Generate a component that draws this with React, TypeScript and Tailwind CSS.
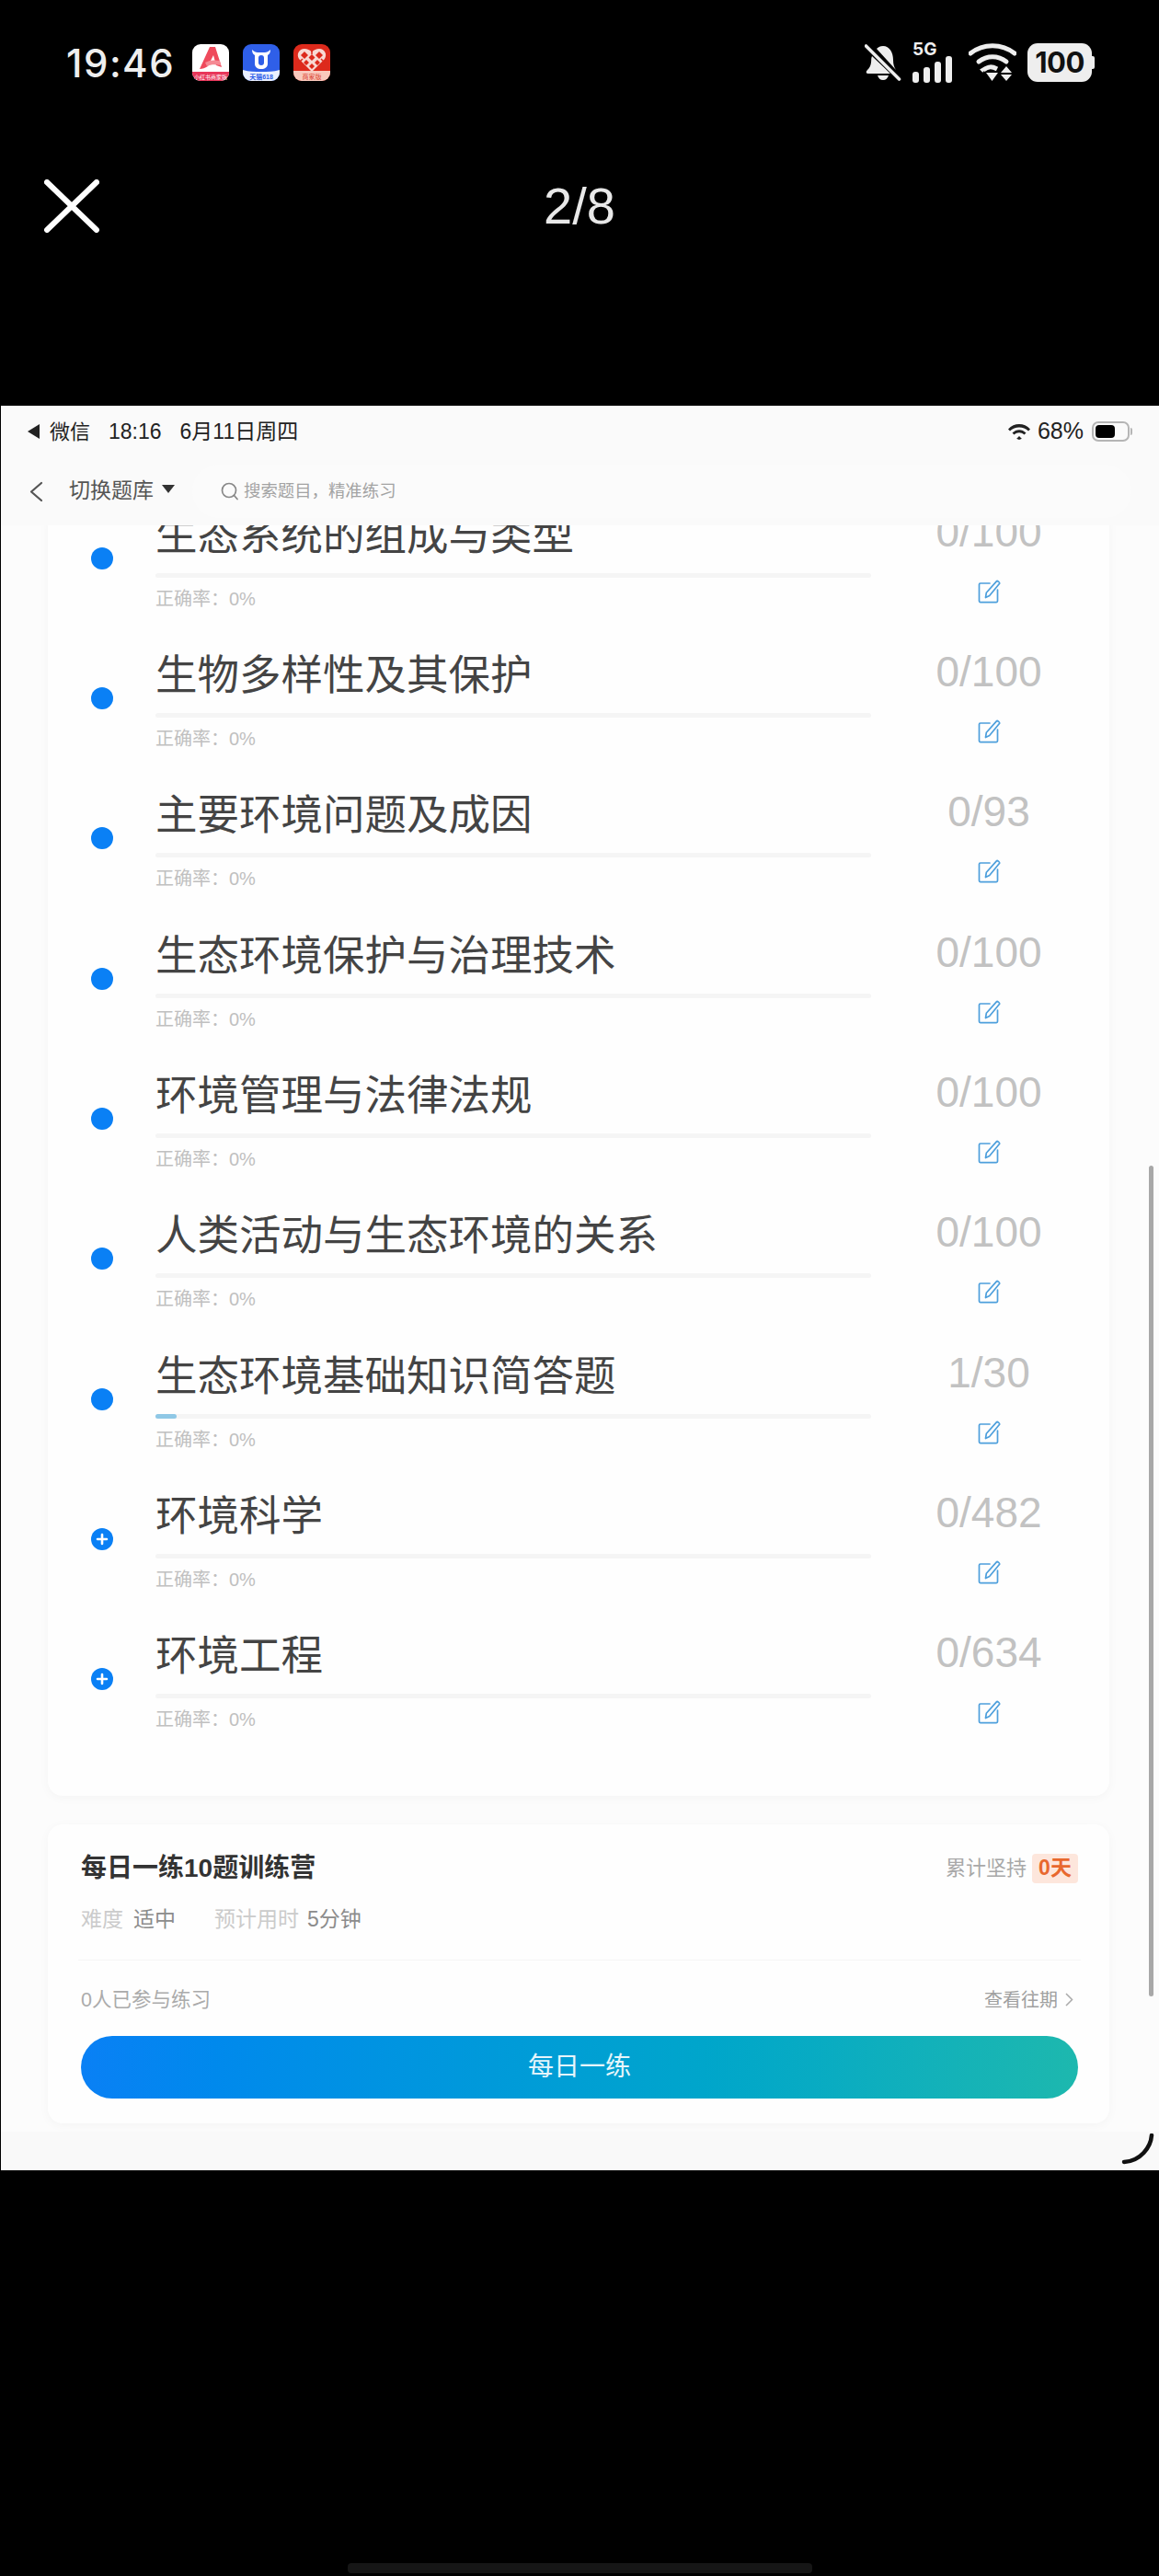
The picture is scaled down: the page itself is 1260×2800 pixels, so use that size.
import React from 'react';

const CJK = "font-['Liberation_Sans','Noto_Sans_CJK_SC',sans-serif]";

const topics = [
  { title: '生态系统的组成与类型', count: '0/100' },
  { title: '生物多样性及其保护', count: '0/100' },
  { title: '主要环境问题及成因', count: '0/93' },
  { title: '生态环境保护与治理技术', count: '0/100' },
  { title: '环境管理与法律法规', count: '0/100' },
  { title: '人类活动与生态环境的关系', count: '0/100' },
  { title: '生态环境基础知识简答题', count: '1/30', started: true },
  { title: '环境科学', count: '0/482', expandable: true },
  { title: '环境工程', count: '0/634', expandable: true },
];

const EditIcon = () => (
  <svg width="25" height="26" viewBox="0 0 25 26" fill="none" stroke="#4d9fdc" strokeWidth="1.7" strokeLinecap="round" strokeLinejoin="round">
    <path d="M13 4H2.8A1.3 1.3 0 0 0 1.5 5.3v18a1.3 1.3 0 0 0 1.3 1.3h17.4a1.3 1.3 0 0 0 1.3-1.3V11" />
    <path d="M8.5 19.5l.8-5.2L20.6 1.6c.7-.6 3.6 1.7 3 2.7L12.7 17.5z" />
  </svg>
);

const TopicDot = ({ expandable }: { expandable?: boolean }) => (
  <div className="w-6 h-6 rounded-full bg-[#0a80f5] flex items-center justify-center">
    {expandable && (
      <svg width="14" height="14" viewBox="0 0 14 14" stroke="white" strokeWidth="2.6" strokeLinecap="round">
        <path d="M7 2v10M2 7h10" />
      </svg>
    )}
  </div>
);

const TopicRow = ({ title, count, started, expandable }: { title: string; count: string; started?: boolean; expandable?: boolean }) => (
  <div className="flex h-[152.33px]">
    <div className="w-[24px] ml-[47px] mr-[46px] pt-[45px] shrink-0">
      <TopicDot expandable={expandable} />
    </div>
    <div className="w-[778px] shrink-0">
      <div className="h-[60px] leading-[66px] text-[45.5px] text-[#444] whitespace-nowrap">{title}</div>
      <div className="mt-[13px] h-[5px] rounded-full bg-[#f5f5f5]">
        {started && <div className="h-[5px] w-[23px] rounded-full bg-[#8fc8e6]" />}
      </div>
      <div className="mt-[11px] h-[24px] leading-[25px] text-[20px] text-[#c0c0c0]">正确率：0%</div>
    </div>
    <div className="ml-[13px] w-[230px] flex flex-col items-center">
      <div className="h-[60px] leading-[56px] text-[46px] text-[#c2c2c2]">{count}</div>
      <div className="mt-[20px] ml-[1px]">
        <EditIcon />
      </div>
    </div>
  </div>
);

const RedBookIcon = () => (
  <svg width="40" height="40" viewBox="0 0 40 40">
    <rect width="40" height="40" rx="9" fill="#fff" />
    <path d="M0 30h40v1a9 9 0 0 1-9 9H9a9 9 0 0 1-9-9z" fill="#e8365a" />
    <path d="M8 27L19 3h6l7 22-6-2-3-11-6 12c-3 2-6 3-9 3z" fill="#ef4a5c" />
    <path d="M14 20c5-3 10-3 16-2l1 5c-6-1-11-1-15 1z" fill="#f58a94" />
    <text x="20" y="38" textAnchor="middle" fontSize="6" fill="#fff">小红书商家版</text>
  </svg>
);

const TmallIcon = () => (
  <svg width="40" height="40" viewBox="0 0 40 40">
    <rect width="40" height="40" rx="9" fill="#2f5fe8" />
    <path d="M0 28c7 2 13 2 20 2s13 0 20-2v3a9 9 0 0 1-9 9H9a9 9 0 0 1-9-9z" fill="#eaf0ff" />
    <path d="M10 6c0 3 1 5 3 6v9c0 4 3 6 7 6s7-2 7-6v-9c2-1 3-3 3-6-2 2-4 3-6 3h-8c-2 0-4-1-6-3z" fill="#fff" />
    <rect x="17" y="12" width="6" height="11" rx="3" fill="#2f5fe8" />
    <text x="20" y="38" textAnchor="middle" fontSize="7" fontWeight="700" fill="#2f5fe8">天猫618</text>
  </svg>
);

const PddIcon = () => (
  <svg width="40" height="40" viewBox="0 0 40 40">
    <rect width="40" height="40" rx="9" fill="#dd2a1c" />
    <path d="M0 29h40v2a9 9 0 0 1-9 9H9a9 9 0 0 1-9-9z" fill="#f9c9bd" />
    <path d="M20 30L6 16c-3-5 0-11 6-11 3 0 6 1 8 4 2-3 5-4 8-4 6 0 9 6 6 11z" fill="#f8d9d3" />
    <path d="M12 8l4 4-4 4-4-4zM28 8l4 4-4 4-4-4zM20 11l3.500 3.500L20 18l-3.500-3.500zM14 17l3 3-3 3-3-3zM26 17l3 3-3 3-3-3zM20 21l3 3-3 3-3-3z" fill="#dd2a1c" />
    <path d="M20 4v7M6 20l4-4M34 20l-4-4" stroke="#dd2a1c" strokeWidth="1.5" />
    <text x="20" y="38" textAnchor="middle" fontSize="7" fill="#d9402e">商家版</text>
  </svg>
);

const BellOff = () => (
  <svg width="40" height="42" viewBox="0 0 40 42" fill="#eeeeee">
    <path d="M20 3c-3 0-5 1-7 3l21 23c-2-3-3-6-3-11 0-8-4-15-11-15zM8 14c-.6 1.300-.8 2.600-.8 4 0 6-2 9-5 12-1 1-.5 3 1.500 3h24.500z" />
    <path d="M14 35h12c-1 3-3 5-6 5s-5-2-6-5z" />
    <path d="M2 2l36 37" stroke="#000" strokeWidth="6" />
    <path d="M1.500 3l36 36" stroke="#eeeeee" strokeWidth="3.600" strokeLinecap="round" />
  </svg>
);

const SignalBars = () => (
  <div className="flex items-end gap-[5px] h-[29px]">
    <div className="w-[7px] h-[12px] rounded-[3px] bg-[#eeeeee]" />
    <div className="w-[7px] h-[17px] rounded-[3px] bg-[#eeeeee]" />
    <div className="w-[7px] h-[23px] rounded-[3px] bg-[#eeeeee]" />
    <div className="w-[7px] h-[29px] rounded-[3px] bg-[#eeeeee]" />
  </div>
);

const PhoneWifi = () => (
  <svg width="52" height="42" viewBox="0 0 52 42" fill="none" stroke="#eeeeee">
    <path d="M2 11c14-11 34-11 48 0" strokeWidth="5" strokeLinecap="round" />
    <path d="M11 20c9-7 21-7 30 0" strokeWidth="5" strokeLinecap="round" />
    <path d="M17 30l-1-1c6-4 9-4 15-1" strokeWidth="5" />
    <path d="M19 32h13l-6.500 9z" fill="#eeeeee" stroke="none" />
    <path d="M41 25l6 7H35zM35 34h12l-6 7z" fill="#eeeeee" stroke="none" />
  </svg>
);

const PadWifi = () => (
  <svg width="24" height="18" viewBox="0 0 24 18" fill="#222">
    <path d="M12 14l3 3h-0.500L12 18l-2.500-1H9z" />
    <path d="M0 6.500C6.500-.8 17.500-.8 24 6.500l-2 2C16.500 3 7.500 3 2 8.500z" />
    <path d="M4.500 10.500c4.500-4.500 10.500-4.500 15 0l-2 2c-3.500-3-7.500-3-11 0z" />
  </svg>
);

export default function App() {
  return (
    <div className={`relative w-[1260px] h-[2800px] bg-black flex flex-col ${CJK}`}>
      {/* phone status bar */}
      <div className="h-[136px] flex items-center pl-[72px] pr-[70px] shrink-0">
        <span className="font-['Inter',sans-serif] font-medium text-[42px] tracking-[1.5px] text-[#eeeeee] w-[137px]">19:46</span>
        <div className="flex gap-[15px]">
          <RedBookIcon />
          <TmallIcon />
          <PddIcon />
        </div>
        <div className="ml-auto flex items-center">
          <BellOff />
          <div className="ml-[12px] flex flex-col items-start w-[48px]">
            <span className="font-['Inter',sans-serif] font-bold text-[19px] leading-[15px] text-[#eeeeee]">5G</span>
            <SignalBars />
          </div>
          <div className="ml-[13px]"><PhoneWifi /></div>
          <div className="ml-[12px] flex items-center">
            <div className="w-[70px] h-[42px] rounded-[11px] bg-[#eeeeee] flex items-center justify-center font-['Inter',sans-serif] font-bold text-[31px] text-[#111] tracking-[-0.5px]">100</div>
            <div className="w-[3px] h-[14px] rounded-r-[2px] bg-[#eeeeee]" />
          </div>
        </div>
      </div>

      {/* viewer toolbar */}
      <div className="h-[176px] flex items-center relative shrink-0">
        <svg className="ml-[48px]" width="60" height="58" viewBox="0 0 60 58" stroke="white" strokeWidth="6" strokeLinecap="round">
          <path d="M3 3l54 52M57 3L3 55" />
        </svg>
        <span className="absolute left-0 right-0 text-center font-['Liberation_Sans',sans-serif] text-[56px] text-[#e8e8e8]">2/8</span>
      </div>

      {/* screenshot being viewed */}
      <div className="mt-[129px] h-[1918px] ml-px relative flex flex-col bg-[#fafafa] overflow-hidden shrink-0">
        <div className="h-[56px] shrink-0 flex items-center pl-[29px] pr-[27px] text-[23px] font-normal text-[#222]">
          <span className="w-0 h-0 border-y-[8px] border-y-transparent border-r-[13px] border-r-[#222]" />
          <span className="ml-[11px] text-[22px]">微信</span>
          <span className="ml-[20px]">18:16</span>
          <span className="ml-[20px]">6月11日周四</span>
          <div className="ml-auto flex items-center">
            <PadWifi />
            <span className="ml-[8px] text-[25px]">68%</span>
            <div className="ml-[9px] w-[41px] h-[22px] rounded-[7px] border-2 border-[#b5b5b5] p-[2px]">
              <div className="w-[21px] h-full rounded-[4px] bg-black" />
            </div>
            <div className="ml-[1px] mr-[2px] w-[2px] h-[8px] rounded-r-[2px] bg-[#b5b5b5]" />
          </div>
        </div>

        <div className="h-[74px] shrink-0 flex items-center z-10 bg-[#fafafa]">
          <svg className="ml-[31px]" width="15" height="23" viewBox="0 0 15 23" fill="none" stroke="#555" strokeWidth="2.2" strokeLinecap="round" strokeLinejoin="round">
            <path d="M13 2L2 11.500 13 21" />
          </svg>
          <span className="ml-[28px] text-[23px] text-[#555] -mt-[2px]">切换题库</span>
          <span className="ml-[9px] -mt-[5px] w-0 h-0 border-x-[7px] border-x-transparent border-t-[9px] border-t-[#333]" />
          <div className="ml-[19px] h-[58px] flex-1 mr-[30px] pl-[31px] rounded-full bg-[#fbfbfb] flex items-center">
            <svg width="20" height="20" viewBox="0 0 20 20" fill="none" stroke="#888" strokeWidth="1.700" strokeLinecap="round">
              <circle cx="9" cy="9" r="7.500" />
              <path d="M14.500 14.500l3.500 4" />
            </svg>
            <span className="ml-[5px] text-[18.4px] text-[#a3a3a3]">搜索题目，精准练习</span>
          </div>
        </div>

        <div className="flex-1 min-h-0 flex flex-col">
          <div className="pl-[51px] pr-[54px] pb-[9px] bg-[#fcfcfc]">
            <div className="-mt-[21.33px] pb-[31px] bg-[#fefefe] rounded-[16px] shadow-[0_2px_12px_rgba(0,0,0,0.035)]">
              {topics.map((t) => (
                <TopicRow key={t.title} {...t} />
              ))}
            </div>

            <div className="mt-[31px] h-[325px] pt-[32px] pl-[36px] pr-[34px] bg-[#fefefe] rounded-[16px] shadow-[0_2px_12px_rgba(0,0,0,0.035)]">
              <div className="h-[32px] flex items-center justify-between">
                <span className="text-[28px] font-semibold text-[#333] leading-[36px]">每日一练10题训练营</span>
                <div className="flex items-center">
                  <span className="text-[22px] leading-[34px] text-[#a8a8a8]">累计坚持</span>
                  <span className="ml-[6px] w-[50px] h-[32px] rounded-[4px] bg-[#fde6dc] flex items-center justify-center text-[23px] font-bold text-[#e8682e]">0天</span>
                </div>
              </div>
              <div className="mt-[25px] h-[30px] flex items-center text-[23px]">
                <span className="text-[#cbcbcb]">难度</span>
                <span className="ml-[11px] text-[#8c8c8c]">适中</span>
                <span className="ml-[42px] text-[#cbcbcb]">预计用时</span>
                <span className="ml-[9px] text-[#8c8c8c]">5分钟</span>
              </div>
              <div className="mt-[28px] h-px -mx-[3px] bg-[#f6f6f6]" />
              <div className="mt-[29px] h-[28px] flex items-center justify-between">
                <span className="text-[21.5px] text-[#ababab]">0人已参与练习</span>
                <div className="flex items-center">
                  <span className="text-[20px] text-[#a0a0a0]">查看往期</span>
                  <svg className="ml-[8px] mr-[5px]" width="9" height="15" viewBox="0 0 9 15" fill="none" stroke="#aaa" strokeWidth="1.500">
                    <path d="M1 1l6.500 6.500L1 14" />
                  </svg>
                </div>
              </div>
              <button className="mt-[25px] w-full h-[68px] rounded-full bg-gradient-to-r from-[#0a80f5] to-[#1db8ae] text-[28px] text-white/90">每日一练</button>
            </div>
          </div>
          <div className="flex-1 bg-[#f9f9f9]" />
        </div>

        {/* scrollbar and loading arc sit over the page */}
        <div className="absolute left-[1248px] top-[826px] w-[5px] h-[903px] rounded-full bg-[#a8a8a8]" />
        <svg className="absolute left-[1218px] top-[1878px]" width="36" height="34" viewBox="0 0 36 34" fill="none" stroke="#111" strokeWidth="4.500" strokeLinecap="round">
          <path d="M33 2c-1 13-12 28-30 29" />
        </svg>
      </div>

      <div className="mt-auto mb-[3px] self-center w-[505px] h-[11px] rounded-[4px] bg-[#161616]" />
    </div>
  );
}
